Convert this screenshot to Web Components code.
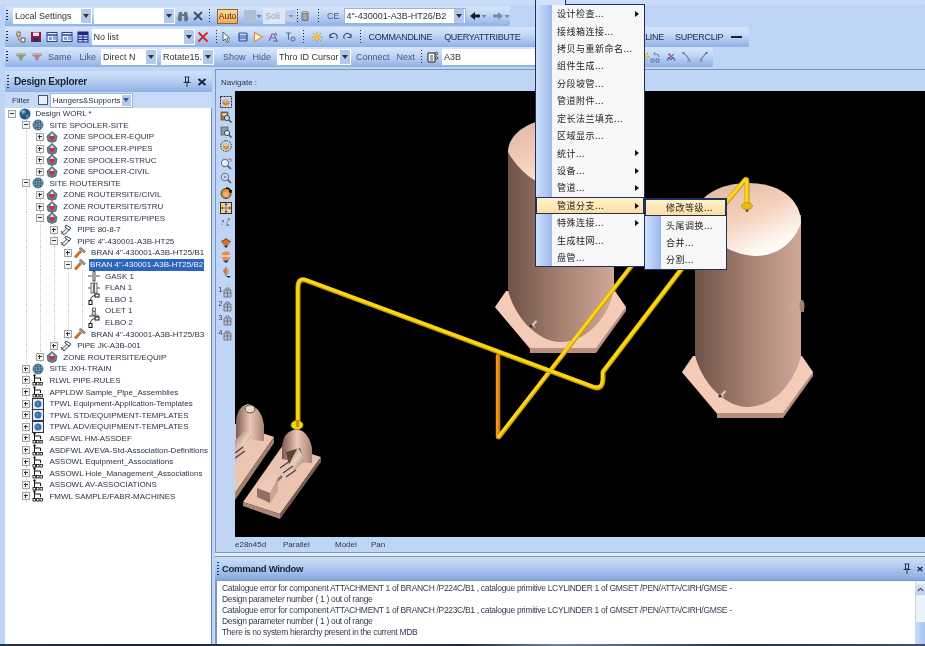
<!DOCTYPE html>
<html lang="zh"><head><meta charset="utf-8"><title>PDMS Design</title>
<style>
html,body{margin:0;padding:0;background:#bfd5f5;overflow:hidden}
body{font:9px "Liberation Sans","Noto Sans CJK SC",sans-serif;color:#2b3444}
</style></head><body>
<ui-app>
  <tool-area slot="top">
    <tool-bar w="925" h="5" plain></tool-bar>
    <tool-bar w="505" h="20" style="margin-top:1px">
      <tb-combo w="79" arrow text="Local Settings" style="margin-left:2px"></tb-combo>
      <tb-combo w="81" arrow text="" style="margin-left:2px"></tb-combo>
      <ui-icon n="binoc" style="margin-left:2px"></ui-icon><ui-icon n="x" style="margin-left:3px"></ui-icon>
      <tb-sep style="margin:0 7px 0 5px"></tb-sep>
      <tb-btn>Auto</tb-btn>
      <span style="width:12px;height:13px;background:#aebed5;margin-left:6px"></span><ui-icon n="car" s="6"></ui-icon>
      <tb-combo w="22" text="Soli" grey style="margin-left:1px"></tb-combo><ui-icon n="dd"></ui-icon>
      <tb-sep></tb-sep>
      <ui-icon n="cyl" style="margin-left:1px"></ui-icon>
      <tb-sep style="margin:0 8px 0 7px"></tb-sep>
      <tb-text>CE</tb-text>
      <tb-combo w="122" arrow box text="4&quot;-430001-A3B-HT26/B2" style="margin-left:4px"></tb-combo>
      <ui-icon n="left" style="margin-left:3px"></ui-icon><ui-icon n="car" s="6"></ui-icon>
      <ui-icon n="right" style="margin-left:5px"></ui-icon><ui-icon n="car" s="6"></ui-icon>
    </tool-bar>
    <tool-bar w="744" h="20" style="margin-top:1px">
      <ui-icon n="tree2" style="margin-left:3.500px"></ui-icon><ui-icon n="save" style="margin-left:3.500px"></ui-icon>
      <ui-icon n="win" style="margin-left:3.500px"></ui-icon><ui-icon n="win" style="margin-left:3.500px"></ui-icon><ui-icon n="table" style="margin-left:3.500px"></ui-icon>
      <tb-combo w="103" arrow text="No list" style="margin-left:3px"></tb-combo>
      <ui-icon n="redx" style="margin-left:2px"></ui-icon>
      <tb-sep style="margin:0 3px 0 7px"></tb-sep>
      <ui-icon n="cursor"></ui-icon><ui-icon n="box" style="margin-left:5px"></ui-icon><ui-icon n="play" style="margin-left:3px"></ui-icon><ui-icon n="cut" style="margin-left:3px"></ui-icon><ui-icon n="to" style="margin-left:6px"></ui-icon>
      <tb-sep style="margin:0 7px 0 6px"></tb-sep>
      <ui-icon n="sun"></ui-icon><ui-icon n="undo" style="margin-left:4px"></ui-icon><ui-icon n="redo" style="margin-left:3px"></ui-icon>
      <tb-sep style="margin:0 8px 0 6px"></tb-sep>
      <tb-text dark style="letter-spacing:-.35px">COMMANDLINE</tb-text>
      <tb-text dark style="margin-left:12px;letter-spacing:-.3px">QUERYATTRIBUTE</tb-text>
      <tb-text dark style="margin-left:118px;letter-spacing:-.3px">OLINE</tb-text>
      <tb-text dark style="margin-left:11px;letter-spacing:-.3px">SUPERCLIP</tb-text>
      <span style="width:11px;height:2px;background:#1a2438;margin-left:8px"></span>
    </tool-bar>
    <tool-bar w="708" h="20">
      <ui-icon n="fgreen" style="margin-left:4px"></ui-icon><ui-icon n="fred" style="margin-left:3.500px"></ui-icon>
      <tb-text style="margin-left:5.500px">Same</tb-text><tb-text style="margin-left:8px">Like</tb-text>
      <tb-combo w="56" arrow text="Direct N" style="margin-left:5px"></tb-combo>
      <tb-combo w="53" arrow text="Rotate15." style="margin-left:4px"></tb-combo>
      <tb-text style="margin-left:9px">Show</tb-text><tb-text style="margin-left:7px">Hide</tb-text>
      <tb-combo w="74" arrow text="Thro ID Cursor" style="margin-left:6px"></tb-combo>
      <tb-text style="margin-left:5px">Connect</tb-text><tb-text style="margin-left:7px">Next</tb-text>
      <tb-sep style="margin:0 5px 0 6px"></tb-sep>
      <ui-icon n="doc"></ui-icon>
      <tb-combo w="100" text="A3B" style="margin-left:3px"></tb-combo>
      <ui-icon n="sun" style="margin-left:96px"></ui-icon>
      <ui-icon n="cutb"></ui-icon><ui-icon n="dim" style="margin-left:3px"></ui-icon><ui-icon n="pa" style="margin-left:4px"></ui-icon><ui-icon n="pb" style="margin-left:4px"></ui-icon>
    </tool-bar>
  </tool-area>

  <design-explorer slot="left"><tree-view></tree-view></design-explorer>

  <view-pane slot="right">
    <span slot="nav">Navigate :</span>
    <icon-strip slot="strip"></icon-strip>
    <scene-3d slot="scene"></scene-3d>
    <span slot="s1">e28n45d</span><span slot="s2">Parallel</span><span slot="s3">Model</span><span slot="s4">Pan</span>
    <command-window slot="cmd">
      <div>Catalogue error for component ATTACHMENT 1 of BRANCH /P224C/B1 , catalogue primitive LCYLINDER 1 of GMSET /PEN/ATTA/CIRH/GMSE -</div>
      <div>Design parameter number ( 1 ) out of range</div>
      <div>Catalogue error for component ATTACHMENT 1 of BRANCH /P223C/B1 , catalogue primitive LCYLINDER 1 of GMSET /PEN/ATTA/CIRH/GMSE -</div>
      <div>Design parameter number ( 1 ) out of range</div>
      <div>There is no system hierarchy present in the current MDB</div>
    </command-window>
  </view-pane>

  <popup-menu slot="over" style="left:535px;top:4px;width:110px" tab>
    <menu-item sub>设计检查...</menu-item><menu-item>接线箱连接...</menu-item><menu-item>拷贝与重新命名...</menu-item>
    <menu-item>组件生成...</menu-item><menu-item>分段坡管...</menu-item><menu-item>管道附件...</menu-item>
    <menu-item>定长法兰填充...</menu-item><menu-item>区域显示...</menu-item><menu-item sub>统计...</menu-item>
    <menu-item sub>设备...</menu-item><menu-item sub>管道...</menu-item><menu-item sub hot>管道分支...</menu-item>
    <menu-item sub>特殊连接...</menu-item><menu-item>生成柱网...</menu-item><menu-item>盘管...</menu-item>
  </popup-menu>
  <popup-menu slot="over" style="left:644px;top:198px;width:83px">
    <menu-item hot>修改等级...</menu-item><menu-item>头尾调换...</menu-item><menu-item>合并...</menu-item><menu-item>分割...</menu-item>
  </popup-menu>
</ui-app>

<script>
const I={
binoc:'<path d="M2 2h3v2h2V2h3l1.500 7H7.500L7 6H5L4.500 9H.5z" fill="#6a7280"/><circle cx="3" cy="9.500" r="2" fill="#6a7280"/><circle cx="9" cy="9.500" r="2" fill="#6a7280"/>',
x:'<path d="M2 2l8 8M10 2l-8 8" stroke="#4a505c" stroke-width="2"/>',
redx:'<path d="M1.500 1.500l9 9M10.500 1.500l-9 9" stroke="#d8222a" stroke-width="1.800"/>',
car:'<path d="M3.500 5h5L6 8z" fill="#6d84a8"/>',
dd:'<rect x="1" y="0" width="10" height="12" fill="#b8cdec"/><path d="M3.500 5h5L6 8z" fill="#7f93b0"/>',
cyl:'<path d="M3 2.500h6v7.500q-3 1.500-6 0z" fill="#a8a8a0" stroke="#555" stroke-width=".8"/><ellipse cx="6" cy="2.500" rx="3" ry="1" fill="#ddd" stroke="#555" stroke-width=".6"/>',
left:'<path d="M1 6l5-4v2.500h5v3H6V10z" fill="#161c28"/>',
right:'<path d="M11 6L6 2v2.500H1v3h5V10z" fill="#7c8ca4"/>',
tree2:'<path d="M2 1h3v4H2zM6 7h4v4H6z" fill="#fff" stroke="#444" stroke-width=".9"/><path d="M3.500 5v4H6" fill="none" stroke="#c9711a" stroke-width="1"/><rect x="1.500" y=".5" width="3" height="2" fill="#dd9a2a"/>',
save:'<rect x="1" y="1" width="10" height="10" fill="#8c1c3a"/><rect x="3" y="1.500" width="6" height="3.500" fill="#f4e5ea"/><rect x="3.500" y="7" width="5" height="4" fill="#2a3166"/>',
win:'<rect x="1" y="1.500" width="10" height="9" fill="#e9effb" stroke="#2c3f92"/><path d="M1 4h10" stroke="#2c3f92" stroke-width="1.500"/><rect x="3" y="6" width="3" height="3" fill="#8b9bd8"/><path d="M7 6h3M7 8h3" stroke="#2c3f92" stroke-width=".8"/>',
table:'<rect x="1" y="1" width="10" height="10" fill="#c7d0f0" stroke="#1a2a86"/><path d="M1 3.500h10M1 6h10M1 8.500h10M6 1v10" stroke="#1a2a86" stroke-width="1"/><rect x="1" y="1" width="10" height="2" fill="#1a2a86"/>',
cursor:'<path d="M3 1v9l2.300-2 1.700 3.500 1.500-.7L6.800 7.400 9.500 7z" fill="#fff" stroke="#455" stroke-width=".9"/>',
box:'<rect x="2" y="2" width="8" height="8" rx="1" fill="none" stroke="#2e4ea0" stroke-width="1.200"/><path d="M2 5h8M2 7h8" stroke="#2e4ea0" stroke-width=".9"/>',
play:'<path d="M2.500 1.500l8 4.500-8 4.500z" fill="#fff6e8" stroke="#e08a2a" stroke-width="1.100"/>',
cut:'<path d="M2 10l3-7 2 0 3 7M4 7h4M8 2l2 2" fill="none" stroke="#7a5aa0" stroke-width="1.100"/><path d="M6 10h5" stroke="#4a6aa0"/>',
to:'<path d="M1 2h5M3.500 2v7" stroke="#5a6a80" stroke-width="1.100"/><circle cx="8" cy="8" r="2" fill="none" stroke="#5a6a80"/>',
sun:'<circle cx="6" cy="6" r="2.800" fill="#f2c21f"/><path d="M6 .5v2M6 9.500v2M.5 6h2M9.500 6h2M2 2l1.500 1.500M10 2L8.500 3.500M2 10l1.500-1.500M10 10L8.500 8.500" stroke="#c98d22" stroke-width="1"/>',
undo:'<path d="M3 3v3.500h3.500M3.300 6.300A3.500 3.500 0 1 1 9.500 8" fill="none" stroke="#3b4f6e" stroke-width="1.100"/>',
redo:'<path d="M9 3v3.500H5.500M8.700 6.300A3.500 3.500 0 1 0 2.500 8" fill="none" stroke="#3b4f6e" stroke-width="1.100"/>',
fgreen:'<path d="M1 4h10L7.500 7v2.500h-3V7z" fill="#7ca56a"/><path d="M1 3h10" stroke="#d0767a"/>',
fred:'<path d="M1 4h10L7.500 7v2.500h-3V7z" fill="#c27a85"/><path d="M1 3h10" stroke="#7aa57a"/>',
doc:'<path d="M1 2h7v9H1z" fill="#fff" stroke="#222"/><path d="M3 5h3M3 7h3M3 9h3" stroke="#222" stroke-width=".8"/><circle cx="9.500" cy="2.500" r="1.300" fill="none" stroke="#444"/><circle cx="9.500" cy="7" r="1.300" fill="none" stroke="#444"/>',
cutb:'<path d="M6 3a3 3 0 0 1 3 3M5 1l-1 2 2 1M1 8h3v3H1zM6 8h3v3H6z" fill="none" stroke="#5a7290" stroke-width=".9"/>',
dim:'<path d="M2 10l2-4 2 3 2-3 2 4M3 3l6 5M9 3L3 8" fill="none" stroke="#4a3f7a" stroke-width=".9"/><path d="M4 2l4 5" stroke="#c8526a"/>',
pa:'<path d="M2 1l6 7" stroke="#51637c" stroke-width="1"/><rect x="6.500" y="8" width="3" height="3" fill="#8a9bb4"/><rect x="1.500" y="1" width="2" height="2" fill="#6a7a90"/>',
pb:'<path d="M10 1L4 8" stroke="#51637c" stroke-width="1"/><rect x="2.500" y="8" width="3" height="3" fill="#8a9bb4"/><rect x="8.500" y="1" width="2" height="2" fill="#6a7a90"/>',
pin:'<path d="M3.500 1h5M4.500 1v5h3V1M2.500 6.500h7M6 6.500V11" fill="none" stroke="#27344a" stroke-width="1"/>',
close:'<path d="M2.500 3l7 6M9.500 3l-7 6" stroke="#1d2636" stroke-width="2"/>',
globe:'<circle cx="6" cy="6" r="5.500" fill="#26519e"/><path d="M2 3q3-2 5 0l-1 3-3 1zM7 7l3-1-1 4-2 0z" fill="#4f9a5a"/><circle cx="4" cy="3.500" r="1.500" fill="#a7c6ee" opacity=".7"/>',
site:'<circle cx="6" cy="6" r="5" fill="#7fb3cf" stroke="#3a5468" stroke-width=".8"/><path d="M6 1v10M1 6h10M2.500 3q3.500 2 7 0M2.500 9q3.500-2 7 0M4 1.500q-2 4.500 0 9M8 1.500q2 4.500 0 9" fill="none" stroke="#2d4a5e" stroke-width=".7"/>',
zone:'<path d="M6 .5l5 4.500-1 5-4 1.500-4-1.500-1-5z" fill="#5d8790" stroke="#2d3d44" stroke-width=".6"/><path d="M6 3l3 3-3 4-3-4z" fill="#d22c44"/><path d="M4 5l2-3 2 3z" fill="#e8eef0"/>',
pipe:'<path d="M1 10L7 4M4 11l6-6" stroke="#7d8b96" stroke-width="1.200"/><path d="M6 1l5 3-2 2-4-3zM1 7l3 4" fill="#fff" stroke="#38424c" stroke-width="1"/>',
bran:'<path d="M1 10.500L7 4" stroke="#c6762c" stroke-width="3"/><path d="M5 1.500l5 4.500 1.500-1.500L7 .5z" fill="#9a9a92" stroke="#555" stroke-width=".6"/>',
gask:'<path d="M0 6h4M8 6h4" stroke="#555"/><rect x="5" y="1" width="2" height="10" fill="#eee" stroke="#222" stroke-width=".8"/>',
flan:'<path d="M0 6h3M9 6h3" stroke="#555"/><rect x="3" y="1" width="2.500" height="10" fill="#eee" stroke="#333" stroke-width=".7"/><rect x="6.500" y="1" width="2.500" height="10" fill="#eee" stroke="#333" stroke-width=".7"/>',
elbo:'<rect x="7" y="1" width="4" height="3" fill="#fff" stroke="#111"/><rect x="1" y="7.500" width="3" height="4" fill="#fff" stroke="#111"/><path d="M7 2.500Q2.500 3 2.500 7.500" fill="none" stroke="#333"/>',
olet:'<path d="M1 10.500h10v1H1z" fill="#333"/><path d="M4 10l1-4h2l1 4z" fill="#ddd" stroke="#333" stroke-width=".7"/><rect x="4.500" y="3" width="3" height="3" fill="#fff" stroke="#333" stroke-width=".7"/>',
net:'<path d="M2.500 1v8M2.500 4h6v3" fill="none" stroke="#111" stroke-width="1"/><circle cx="2.500" cy="1.500" r="1" fill="none" stroke="#111" stroke-width=".7"/><rect x="1" y="8.500" width="2.500" height="2.500" fill="#fff" stroke="#111" stroke-width=".8"/><rect x="4.500" y="8.500" width="2.500" height="2.500" fill="#fff" stroke="#111" stroke-width=".8"/><rect x="8" y="8.500" width="2.500" height="2.500" fill="#fff" stroke="#111" stroke-width=".8"/>',
tpl:'<rect x=".5" y=".5" width="11" height="11" fill="#e9eef5" stroke="#30394a"/><circle cx="6" cy="6" r="3.500" fill="#3a6cc0"/><path d="M4 4l3 1-1 3z" fill="#5aa35a"/>',
s1:'<rect x=".5" y=".5" width="11" height="11" fill="none" stroke="#222" stroke-dasharray="2 1"/><path d="M2.500 5L6 3l3.500 2v3L6 10 2.500 8z" fill="#e88a22"/><path d="M2.500 5L6 7l3.500-2L6 3z" fill="#b8b8b0"/>',
s2:'<rect x="1" y="1" width="7" height="8" fill="#b46a2c" stroke="#555" stroke-width=".7"/><rect x="2.500" y="2.500" width="4" height="2" fill="#e8e8e8"/><circle cx="7" cy="7" r="2.600" fill="#cdd6e4" stroke="#404858"/><path d="M9 9l2.500 2.500" stroke="#404858" stroke-width="1.500"/>',
s3:'<rect x="1" y="1" width="7" height="8" fill="#8a9ab0" stroke="#555" stroke-width=".7"/><circle cx="7" cy="7" r="2.600" fill="#dfe8f4" stroke="#404858"/><path d="M9 9l2.500 2.500" stroke="#404858" stroke-width="1.500"/>',
s4:'<circle cx="6" cy="6" r="5.300" fill="none" stroke="#222" stroke-dasharray="1.500 1"/><path d="M3 5l3-2 3 2v3L6 10 3 8z" fill="#e88a22"/><path d="M3 5l3 1.500L9 5 6 3z" fill="#d0d0c8"/>',
s5:'<circle cx="5" cy="5" r="3.600" fill="#e4edf8" stroke="#6a7b94" stroke-width="1.100"/><path d="M7.500 7.500l3.500 3.500" stroke="#5c6c84" stroke-width="1.800"/><path d="M8 1l3 0 0 3" fill="none" stroke="#cc5a60" stroke-width=".9"/>',
s6:'<circle cx="5" cy="5" r="3.600" fill="#dbe6f4" stroke="#6a7b94" stroke-width="1.100"/><path d="M7.500 7.500l3.500 3.500" stroke="#5c6c84" stroke-width="1.800"/><path d="M3.500 5h3M5 3.500v3" stroke="#5c6c84" stroke-width=".8"/>',
s7:'<circle cx="6" cy="6.500" r="5" fill="#e88a22" stroke="#33425a"/><path d="M3.500 5.500L6 4l2.500 1.500v3L6 10 3.500 8.500z" fill="#f4b26a"/><path d="M6 1a5 5 0 0 1 5 4l-2-.5M11 5l.5-2" fill="none" stroke="#111" stroke-width="1.300"/>',
s8:'<rect x=".5" y=".5" width="11" height="11" fill="#f7cd8a" stroke="#3a2e2a"/><path d="M6 1v10M1 6h10" stroke="#6a82a0" stroke-width="1"/><path d="M6 1L4.500 3h3zM6 11L4.500 9h3zM1 6l2-1.500v3zM11 6L9 4.500v3z" fill="#3a4e70"/>',
s9:'<path d="M2 8l1-3M6 9l2-6" stroke="#7c8a9a" stroke-width="1.200" stroke-dasharray="1.500 1"/><circle cx="9" cy="2" r="1" fill="#5a708a"/><circle cx="3" cy="4" r="1" fill="#5a708a"/><circle cx="8" cy="8" r="1" fill="#5a708a"/>',
s10:'<path d="M6 2l4.500 3-1 3-3.500 2-3.500-2-1-3z" fill="#df6c22"/><path d="M1 6l5-3 5 3" fill="none" stroke="#6a5a50"/><path d="M3.500 9.500h5L6 12z" fill="#25324a"/>',
s11:'<circle cx="6" cy="5" r="4.500" fill="#ea8a46"/><path d="M1.500 5h9" stroke="#eee" stroke-width="1.400"/><path d="M3 9.500h6L6 12z" fill="#25324a"/>',
s12:'<path d="M6 1v9" stroke="#50607a" stroke-width="1"/><path d="M5.500 2Q1 5 5.500 9z" fill="#de6a1e"/><path d="M7 3h2v5H7z" fill="#ef9c56"/><path d="M6 10h5L8.500 12z" fill="#25324a"/>'};
const css=(c)=>`<style>${c}</style>`;
function def(name,fn){customElements.define(name,class extends HTMLElement{connectedCallback(){if(this.shadowRoot)return;const r=this.attachShadow({mode:'open'});r.innerHTML=fn(this);}});}

def('ui-icon',e=>{const s=e.getAttribute('s')||12;return css(`:host{display:inline-flex;flex:none;width:${s}px;height:${s==6?12:s}px;align-items:center}svg{display:block}`)+`<svg width="${s}" height="${s==6?12:s}" viewBox="${s==6?'3 0 6 12':'0 0 12 12'}">${I[e.getAttribute('n')]||''}</svg>`});

def('ui-app',()=>css(`:host{display:block;position:relative;width:925px;height:646px;overflow:hidden;background:#bfd5f5;filter:blur(.35px)}
.mid{display:flex;height:575px}.bot{height:2px;background:linear-gradient(90deg,#27303f,#1a2130 20%,#3e4c62 30%,#20293a 50%,#6f84a4 60%,#25304a 80%,#405070)}`)
+`<slot name="top"></slot><div class="mid"><slot name="left"></slot><slot name="right"></slot></div><div class="bot"></div><slot name="over"></slot>`);

def('tool-area',()=>css(`:host{display:block;height:69px;overflow:hidden}`)+`<slot></slot>`);

def('tool-bar',e=>{const p=e.hasAttribute('plain');const w=+e.getAttribute('w'),h=+e.getAttribute('h');
return css(`:host{display:flex;align-items:center;box-sizing:border-box;height:${h}px;width:${w}px;margin-left:${p?0:5}px;background:${p?'#c8dcf8':'linear-gradient(#d7e5fb,#c6daf7 35%,#8fb1e6)'};border-radius:0 2px 2px 0;font-size:9px;color:#48566c}
.g{flex:none;width:2px;height:12px;margin:0 3px 0 1px;background:repeating-linear-gradient(#27354c 0 1px,transparent 1px 3px)}`)+(p?'':'<i class="g"></i>')+`<slot></slot>`});

def('tb-sep',()=>css(`:host{display:block;flex:none;width:1px;height:15px;background:repeating-linear-gradient(#1e2a40 0 1px,transparent 1px 3px)}`));
def('tb-text',e=>css(`:host{display:block;flex:none;white-space:nowrap;color:${e.hasAttribute('dark')?'#26324a':'#4d5b72'}}`)+`<slot></slot>`);
def('tb-btn',()=>css(`:host{display:block;flex:none;box-sizing:border-box;width:21px;height:15px;line-height:13px;text-align:center;background:linear-gradient(#fbd79a,#f5a94e);border:1px solid #8a6a3a;color:#4a3a1c;font-size:8.500px}`)+`<slot></slot>`);
def('tb-combo',e=>{const w=e.getAttribute('w');const b=e.hasAttribute('box');
return css(`:host{display:flex;flex:none;box-sizing:border-box;width:${w}px;height:16px;align-items:center;background:${e.hasAttribute('grey')?'#dde7f6':'#fff'};${b?'border:1px solid #9db4d6;':''}color:${e.hasAttribute('grey')?'#98a4b6':'#333'};padding-left:2px;white-space:nowrap}
span{flex:1;min-width:0}.a{flex:none;width:10px;height:14px;margin-right:1px;background:#b4c9ea;display:flex;align-items:center;justify-content:center}
.a:after{content:"";border:3px solid transparent;border-top:4px solid #25344e;border-bottom:0}`)
+`<span>${e.getAttribute('text')||''}</span>`+(e.hasAttribute('arrow')?'<i class="a"></i>':'')});

def('design-explorer',()=>css(`:host{display:flex;flex-direction:column;flex:none;width:207px;margin:2px 3px 0 5px;font-size:8px;color:#2a3344}
.h{height:21px;display:flex;align-items:center;background:linear-gradient(#cfe0f9,#c3d8f6 30%,#8db0e5);padding:0 4px 0 2px}
.g{width:2px;height:14px;margin-right:5px;background:repeating-linear-gradient(#27354c 0 1px,transparent 1px 3px)}
b{font:bold 10px "Liberation Sans",sans-serif;color:#1c2638;flex:1;letter-spacing:-.25px}
.f{height:16px;display:flex;align-items:center;padding-left:7px;background:#c6daf7}
.c{width:8px;height:8px;border:1px solid #42546e;background:#e8effa;margin:0 2px 0 8px}
.k{box-sizing:border-box;width:83px;height:15px;background:#fff;border:1px solid #9db4d6;display:flex;align-items:center;padding-left:2px;white-space:nowrap}
.k i{margin-left:auto;width:9px;height:11px;background:#b4c9ea;margin-right:1px;flex:none;display:flex;align-items:center;justify-content:center}
.k i:after{content:"";border:3px solid transparent;border-top:4px solid #3a5a94;border-bottom:0}
.t{flex:1;background:#fff;border-right:1.500px solid #6c89b5;overflow:hidden}`)
+`<div class="h"><i class="g"></i><b>Design Explorer</b><ui-icon n="pin"></ui-icon><ui-icon n="close" style="margin-left:3px"></ui-icon></div>
<div class="f">Filter<i class="c"></i><span class="k">Hangers&amp;Supports<i></i></span></div><div class="t"><slot></slot></div>`);

const T=[[0,'-','globe','Design WORL *'],[1,'-','site','SITE SPOOLER-SITE'],[2,'+','zone','ZONE SPOOLER-EQUIP'],[2,'+','zone','ZONE SPOOLER-PIPES'],[2,'+','zone','ZONE SPOOLER-STRUC'],[2,'+','zone','ZONE SPOOLER-CIVIL'],[1,'-','site','SITE ROUTERSITE'],[2,'+','zone','ZONE ROUTERSITE/CIVIL'],[2,'+','zone','ZONE ROUTERSITE/STRU'],[2,'-','zone','ZONE ROUTERSITE/PIPES'],[3,'+','pipe','PIPE 80-8-7'],[3,'-','pipe','PIPE 4"-430001-A3B-HT25'],[4,'+','bran','BRAN 4"-430001-A3B-HT25/B1'],[4,'-','bran','BRAN 4"-430001-A3B-HT25/B2',1],[5,'','gask','GASK 1'],[5,'','flan','FLAN 1'],[5,'','elbo','ELBO 1'],[5,'','olet','OLET 1'],[5,'','elbo','ELBO 2'],[4,'+','bran','BRAN 4"-430001-A3B-HT25/B3'],[3,'+','pipe','PIPE JK-A3B-001'],[2,'+','zone','ZONE ROUTERSITE/EQUIP'],[1,'+','site','SITE JXH-TRAIN'],[1,'+','net','RLWL PIPE-RULES'],[1,'+','net','APPLDW Sample_Pipe_Assemblies'],[1,'+','tpl','TPWL Equipment-Application-Templates'],[1,'+','tpl','TPWL STD/EQUIPMENT-TEMPLATES'],[1,'+','tpl','TPWL ADV/EQUIPMENT-TEMPLATES'],[1,'+','net','ASDFWL HM-ASSDEF'],[1,'+','net','ASDFWL AVEVA-Std-Association-Definitions'],[1,'+','net','ASSOWL Equipment_Associations'],[1,'+','net','ASSOWL Hole_Management_Associations'],[1,'+','net','ASSOWL AV-ASSOCIATIONS'],[1,'+','net','FMWL SAMPLE/FABR-MACHINES']];
def('tree-view',()=>{const esc=s=>s.replace(/"/g,'&quot;');let h='';T.forEach((r,i)=>{const g=[];for(let k=1;k<=r[0];k++){let more=false;for(let j=i+(k==r[0]?0:1);j<T.length;j++){if(T[j][0]<k)break;if(T[j][0]==k&&j>i||(k==r[0]&&j==i)){more=true;break}}if(more)g.push(k)}
h+=`<tree-row l="${r[0]}" e="${r[1]}" i="${r[2]}" g="${g.join(',')}" ${r[4]?'sel':''} t="${esc(r[3])}"></tree-row>`});return css(`:host{display:block}`)+h});
def('tree-row',e=>{const l=+e.getAttribute('l'),x=3+13.9*l,exp=e.getAttribute('e');const g=(e.getAttribute('g')||'').split(',').filter(Boolean).map(k=>7+13.9*k);
const bg=g.map(v=>`repeating-linear-gradient(#c6c6c6 0 1px,transparent 1px 2px) ${v}px 0/1px 100% no-repeat`).join(',');const sel=e.hasAttribute('sel');
return css(`:host{display:flex;align-items:center;height:11.6px;white-space:nowrap;color:#2a3244;${bg?`background:${bg};`:''}padding-left:${x}px;font-size:8px}
.e{flex:none;box-sizing:border-box;width:8px;height:8px;border:1px solid #a0a4a8;background:#f2f2f2;position:relative}
.e:before{content:"";position:absolute;left:1px;right:1px;top:2px;height:1px;background:#333}
.e.p:after{content:"";position:absolute;top:1px;bottom:1px;left:2px;width:1px;background:#333}
.n{flex:none;width:8px}ui-icon{margin:0 0 0 2.500px}
span{margin-left:4px;padding:0 1px;${sel?'background:#2c65bd;color:#eef3ff;height:12px;line-height:12px;margin-left:2.500px;padding:0 1px 0 1.500px;':''}}`)
+(exp?`<i class="e ${exp=='+'?'p':''}"></i>`:'<i class="n"></i>')+`<ui-icon n="${e.getAttribute('i')}"></ui-icon><span>${e.getAttribute('t').replace(/&/g,'&amp;')}</span>`});

def('view-pane',()=>css(`:host{display:flex;flex-direction:column;flex:none;width:710px;border-top:1px solid #7f94ae;font-size:8px;color:#2c3648;box-shadow:inset 1px 0 #8298b8}
.n{height:21px;display:flex;align-items:center;padding:4px 0 0 6px;box-sizing:border-box;font-size:8px}
.m{display:flex;height:446px}.st{height:15px;display:flex;align-items:center;padding-left:20px}
.st div{flex:none}.st div:nth-child(1){width:48px}.st div:nth-child(2){width:52px}.st div:nth-child(3){width:36px}
.sp{height:5px;box-sizing:border-box;border-top:1px solid #7f94ae;border-bottom:1px solid #7f94ae;background:#e3edfb}`)
+`<div class="n"><slot name="nav"></slot></div><div class="m"><slot name="strip"></slot><slot name="scene"></slot></div>
<div class="st"><div><slot name="s1"></slot></div><div><slot name="s2"></slot></div><div><slot name="s3"></slot></div><div><slot name="s4"></slot></div></div><div class="sp"></div><slot name="cmd"></slot>`);

def('icon-strip',()=>{const it=[['s1',5],['s2',3],['s3',3],['s4',2],['s5',6],['s6',2],['s7',3],['s8',3],['s9',3],['s10',7],['s11',3],['s12',3]];
let h='';it.forEach(([n,m])=>h+=`<ui-icon n="${n}" style="margin-top:${m}px"></ui-icon>`);
[['1',8],['2',2],['3',2],['4',3]].forEach(([n,m])=>h+=`<div class="l" style="margin-top:${m}px"><span>${n}</span><svg width="11" height="12" viewBox="0 0 11 12"><path d="M2 4h7v7H2z" fill="#b9c2cc" stroke="#5f6a78" stroke-width=".8"/><path d="M4 4V2h3v2M2 7h7M5.500 4v7" fill="none" stroke="#5f6a78" stroke-width=".8"/></svg></div>`);
return css(`:host{display:flex;flex-direction:column;flex:none;box-sizing:border-box;width:20px;padding:0 0 0 4.500px}
.l{display:flex;height:12px;margin-left:-1px;width:15px}.l span{line-height:7px;margin-right:-1px;font-size:7px;width:4px}`)+h});

function vessel(dx,dy){return `<g transform="translate(${dx} ${dy})">
<path d="M682 372L717 414V418H783L813 376V372Z" fill="#b78f80"/>
<path d="M682 372L693 356H802L813 372L783 413H717Z" fill="#f3cbb7"/>
<path d="M695 215V355C700 378 722 407 748 407C775 407 796 380 801 355V215Z" fill="url(#bd)"/>
<path d="M695 217C695 198 718 183 748 183C780 183 801 200 801 223C795 240 780 256 755 256C725 254 705 235 695 217Z" fill="url(#dm)"/>
</g>`}
function noz(x,y){return `<g transform="translate(${x} ${y})"><path d="M-4 3L0-1 3-4 4-2 1 1 3 4 0 2z" fill="#dccabf"/><circle cx="-2" cy="2" r="1.600" fill="#3a3028"/></g>`}
def('scene-3d',()=>css(`:host{display:block;flex:none;width:690px;height:446px;background:#000;overflow:hidden}svg{display:block}`)+
`<svg width="690" height="446" viewBox="235 91 690 446">
<defs>
<linearGradient id="bd"><stop offset="0" stop-color="#705247"/><stop offset=".55" stop-color="#a98575"/><stop offset="1" stop-color="#cfa898"/></linearGradient>
<linearGradient id="dm" x1=".1" y1="0" x2=".75" y2="1"><stop offset="0" stop-color="#e0b5a1"/><stop offset=".5" stop-color="#f4d1be"/><stop offset=".85" stop-color="#fff6ef"/><stop offset="1" stop-color="#fff"/></linearGradient>
<linearGradient id="sd" x1="0" x2="1"><stop offset="0" stop-color="#7a5a4e"/><stop offset=".5" stop-color="#ecc9b8"/><stop offset="1" stop-color="#a88374"/></linearGradient>
<linearGradient id="cn" x1="0" y1="0" x2="1" y2="1"><stop offset="0" stop-color="#8a6a5c"/><stop offset=".5" stop-color="#ecd0c0"/><stop offset="1" stop-color="#75584c"/></linearGradient>
</defs>
${vessel(-187,-65)}${vessel(0,0)}
${noz(533,324)}${noz(722,394)}
<g transform="translate(798 306)"><path d="M-9-3L4-6 6 6-7 2z" fill="#c8a898"/><ellipse cx="4" cy="0" rx="2.500" ry="6" fill="#a08070"/></g>
<!-- left pump -->
<path d="M235 493L274 437L236 424L235 424Z" fill="#ecc5b3"/>
<path d="M235 500L274 443V437L235 493Z" fill="#a07e70"/>
<path d="M236 445V420Q238 406 248 404Q262 408 264 425V441L250 440Z" fill="url(#sd)"/>
<ellipse cx="250" cy="409" rx="5" ry="4" fill="#e8d8c8" stroke="#604a40"/>
<path d="M235 440L246 430L252 436L238 452L235 455Z" fill="url(#cn)"/>
<path d="M235 449L241 444L245 450L235 463Z" fill="#d8bcae"/><path d="M235 453L243 447M235 458L245 451" stroke="#4a3c34" stroke-width="1.200"/>
<!-- right pump -->
<path d="M243 502L280 514L321 457L283 445Z" fill="#ebc3b1"/>
<path d="M243 502V506L280 519V514Z" fill="#a9877a"/><path d="M280 514V519L321 462V457Z" fill="#7c5f52"/>
<path d="M282 459V447Q283 431 297 429Q309 432 312 448V463L298 462Z" fill="url(#sd)"/>
<path d="M286 452L300 448L304 461L290 470Z" fill="#5a4238"/>
<path d="M286 470L298 447L305 460L291 474Z" fill="url(#cn)"/>
<path d="M278 470L288 462L295 473L285 481Z" fill="#e2c6b8"/><path d="M280 468L290 461M283 473L293 466M286 477L296 470" stroke="#4a3c34" stroke-width="1.200"/>
<path d="M276 482L282 476" stroke="#8d7060" stroke-width="2.500"/>
<path d="M257 488L273 472L278 477L270 493Z" fill="#ecc9b8"/>
<path d="M270 493L278 477V491L270 503Z" fill="#c9a594"/>
<path d="M257 488L270 493V503L257 497Z" fill="#8f7062"/>
<!-- pipes -->
<g fill="none" stroke-linejoin="round" stroke-linecap="round">
<path d="M498 356V437" stroke="#d97b0a" stroke-width="4.500"/><path d="M497 356V437" stroke="#f5a31d" stroke-width="1.500"/>
<path d="M499 437L640 255" stroke="#c9a20a" stroke-width="4.500"/><path d="M498.500 436.500L640 254.500" stroke="#ffd61c" stroke-width="2.800"/>
<path d="M298 425V288Q298 278 305 280L593 387Q603 391 603 378V372L690 258" stroke="#c49c08" stroke-width="5"/>
<path d="M297.700 425V288Q298 277.500 305 279.500L593 386.500Q602.500 389.500 602.500 378V372L690 257.500" stroke="#fbd80f" stroke-width="3"/>
<path d="M724 205L745 180Q747 178 747 183V203" stroke="#c9a20a" stroke-width="5"/>
<path d="M724 204.500L745 179.500Q746.500 178 746.700 183V203" stroke="#ffd61c" stroke-width="3"/>
</g>
<ellipse cx="747" cy="206" rx="5.500" ry="3.500" fill="#e6bb0c" stroke="#a88406" stroke-width=".6"/>
<circle cx="747" cy="210.500" r="1.500" fill="#6f5a10"/>
<ellipse cx="297" cy="425" rx="6" ry="4.500" fill="#eedc10" stroke="#a89200"/>
<path d="M297.500 420v7" stroke="#c0960a" stroke-width="3"/>
</svg>`);

def('command-window',()=>css(`:host{display:block;font-size:8.500px;color:#333d4e}
.h{height:23px;display:flex;align-items:center;background:linear-gradient(#c9dcf8,#c0d5f6 25%,#86a9e0);padding:0 1px 0 2px}
.g{width:2px;height:14px;margin-right:3px;background:repeating-linear-gradient(#27354c 0 1px,transparent 1px 3px)}
b{flex:1;font:bold 9.500px "Liberation Sans",sans-serif;color:#1a2436;letter-spacing:-.3px;margin-left:0}
.b{display:flex;box-sizing:border-box;height:64px;background:#fff;border:1px solid #7f94ae;border-width:1px 0 0 1px;margin-left:1px}
.t{flex:1;padding:2px 0 0 5px;line-height:10.900px;letter-spacing:-.32px;white-space:nowrap;overflow:hidden}
.s{flex:none;width:10px;background:#eaf1fb;display:flex;flex-direction:column;box-shadow:inset 1px 0 #c3d2e8}
.u{height:11px;background:linear-gradient(#dbe7f8,#b8cdee);margin-top:3px;display:flex;justify-content:center;align-items:center}
.th{margin-top:auto;height:22px;background:linear-gradient(90deg,#c9dbf7,#a9c3ee)}`)
+`<div class="h"><i class="g"></i><b>Command Window</b><ui-icon n="pin"></ui-icon><ui-icon n="close" style="margin-left:3px;width:8px;overflow:hidden"></ui-icon></div>
<div class="b"><div class="t"><slot></slot></div><div class="s"><div class="u"><svg width="7" height="5" viewBox="0 0 7 5"><path d="M.8 4L3.500 1.300 6.200 4" fill="none" stroke="#45566f" stroke-width="1.300"/></svg></div><div class="th"></div></div></div>`);

def('popup-menu',e=>{const tab=e.hasAttribute('tab');return css(`:host{display:block;position:absolute;box-sizing:border-box;border:1px solid #1f2f60;background:linear-gradient(90deg,#d0e0f9,#98b9ed 16px,#f7f7f7 16px);font:9px "Noto Sans CJK SC","Liberation Sans",sans-serif;color:#1c1c1c}
.tab{position:absolute;left:-1px;top:-5px;width:29px;height:5px;background:#d3e2f9;border:solid #1f2f60;border-width:0 1px;box-sizing:content-box}`)+(tab?'<i class="tab"></i>':'')+`<slot></slot>`});
def('menu-item',e=>{const hot=e.hasAttribute('hot');return css(`:host{display:flex;align-items:center;box-sizing:border-box;height:17.430px;padding-left:21px;letter-spacing:.5px;white-space:nowrap;position:relative;${hot?'background:linear-gradient(#fff3cf,#fbdd9e);outline:1px solid #1f2f60;outline-offset:-1px;':''}}
.r{position:absolute;right:5px;top:6px;border:3px solid transparent;border-left:4px solid #111;border-right:0}`)+`<slot></slot>`+(e.hasAttribute('sub')?'<i class="r"></i>':'')});
</script>
</body></html>
